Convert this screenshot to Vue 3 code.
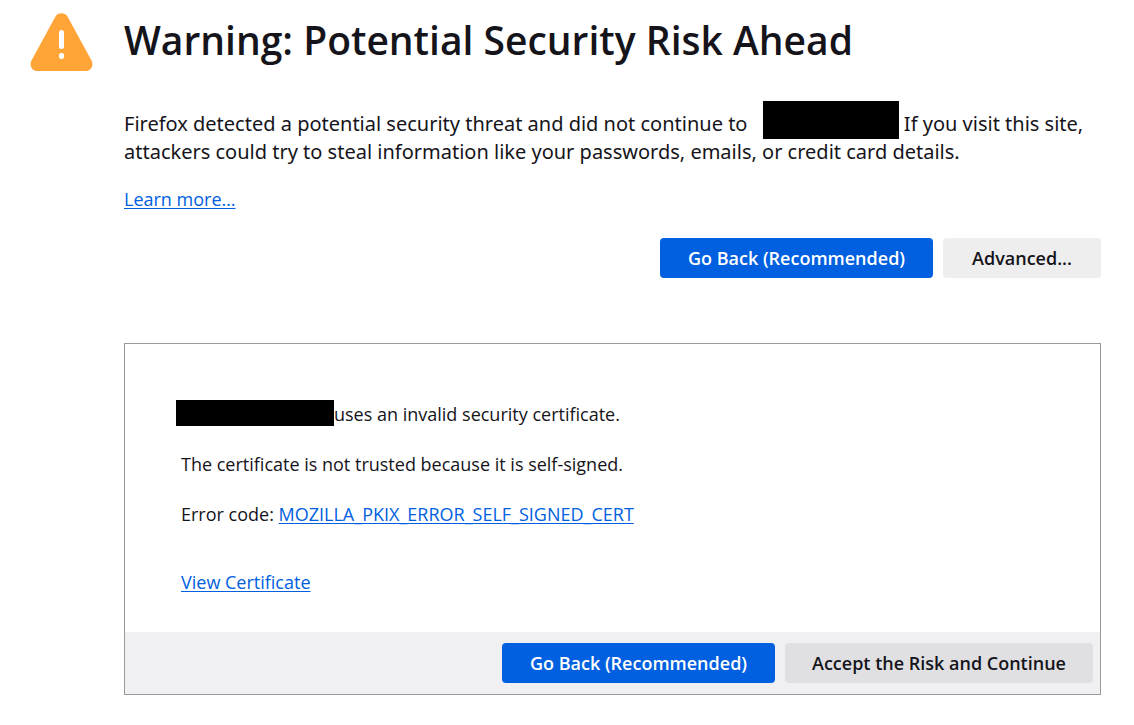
<script setup>
const errorCode = 'MOZILLA_PKIX_ERROR_SELF_SIGNED_CERT'
</script>

<template>
  <main class="page">
    <svg class="warning-icon" viewBox="0 0 64 60" aria-hidden="true">
      <path d="M25.500 4.500C28 .2 35 .2 37.500 4.500L61.500 48.500C64 53.500 61 59 55.500 59H7.500C2 59-1 53.500 1.500 48.500Z" fill="#ffa436" />
      <rect x="29" y="18" width="5" height="19" rx="2.500" fill="#fff" />
      <rect x="29" y="41" width="5" height="6" rx="2" fill="#fff" />
    </svg>
    <div class="content">
      <h1>Warning: Potential Security Risk Ahead</h1>
      <p class="intro">Firefox detected a potential security threat and did not continue to <span class="redacted host"></span> If you visit this site, attackers could try to steal information like your passwords, emails, or credit card details.</p>
      <a class="learn" href="#">Learn more…</a>
      <div class="actions">
        <button class="primary" type="button">Go Back (Recommended)</button>
        <button class="advanced" type="button">Advanced...</button>
      </div>
      <section class="panel">
        <div class="details">
          <p class="cert"><span class="redacted name"></span>uses an invalid security certificate.</p>
          <p>The certificate is not trusted because it is self-signed.</p>
          <p>Error code: <a href="#">{{ errorCode }}</a></p>
          <p class="view"><a href="#">View Certificate</a></p>
        </div>
        <div class="footer">
          <button class="primary" type="button">Go Back (Recommended)</button>
          <button class="accept" type="button">Accept the Risk and Continue</button>
        </div>
      </section>
    </div>
  </main>
</template>

<style>
body { margin: 0; background: #fff; }
</style>

<style scoped>
.page {
  display: flex;
  align-items: flex-start;
  gap: 30px;
  box-sizing: border-box;
  padding: 12px 33px 30px 30px;
  color: #15141a;
  font-family: "Segoe UI", "Open Sans", "Noto Sans", sans-serif;
  font-size: 18px;
  line-height: 26px;
}
.warning-icon { flex: none; width: 64px; height: 60px; }
.content { flex: 1; min-width: 0; }
h1 { margin: 0; font-size: 39px; line-height: 56px; font-weight: 600; }
p { margin: 0; }
.intro { margin-top: 41px; font-family: "Segoe UI", "Noto Sans", sans-serif; font-size: 20px; line-height: 28px; }
.redacted { display: inline-block; background: #000; }
.host { width: 136px; height: 38px; margin: -8px 0 -8px 10px; }
.learn { display: block; width: fit-content; margin-top: 20px; }
a { color: #0060df; text-decoration: underline; text-decoration-thickness: 1px; text-underline-offset: 2px; }
.actions, .footer { display: flex; justify-content: flex-end; gap: 10px; }
.actions { margin-top: 26px; }
button {
  height: 40px;
  padding: 0;
  border: 0;
  border-radius: 4px;
  background: #eee;
  color: #15141a;
  font: inherit;
  font-weight: 600;
}
.primary { width: 273px; background: #0060df; color: #fff; }
.advanced { width: 158px; }
.accept { width: 308px; background: #e0e0e3; }
.panel { margin-top: 65px; border: 1px solid #9a9a9d; }
.details { display: flex; flex-direction: column; gap: 22px; padding: 56px; padding-bottom: 36px; line-height: 28px; }
.cert { display: flex; align-items: flex-start; margin-left: -5px; }
.name { width: 158px; height: 26px; }
.view { margin-top: 18px; }
.footer { padding: 11px 7px; background: #f0f0f3; }
</style>
